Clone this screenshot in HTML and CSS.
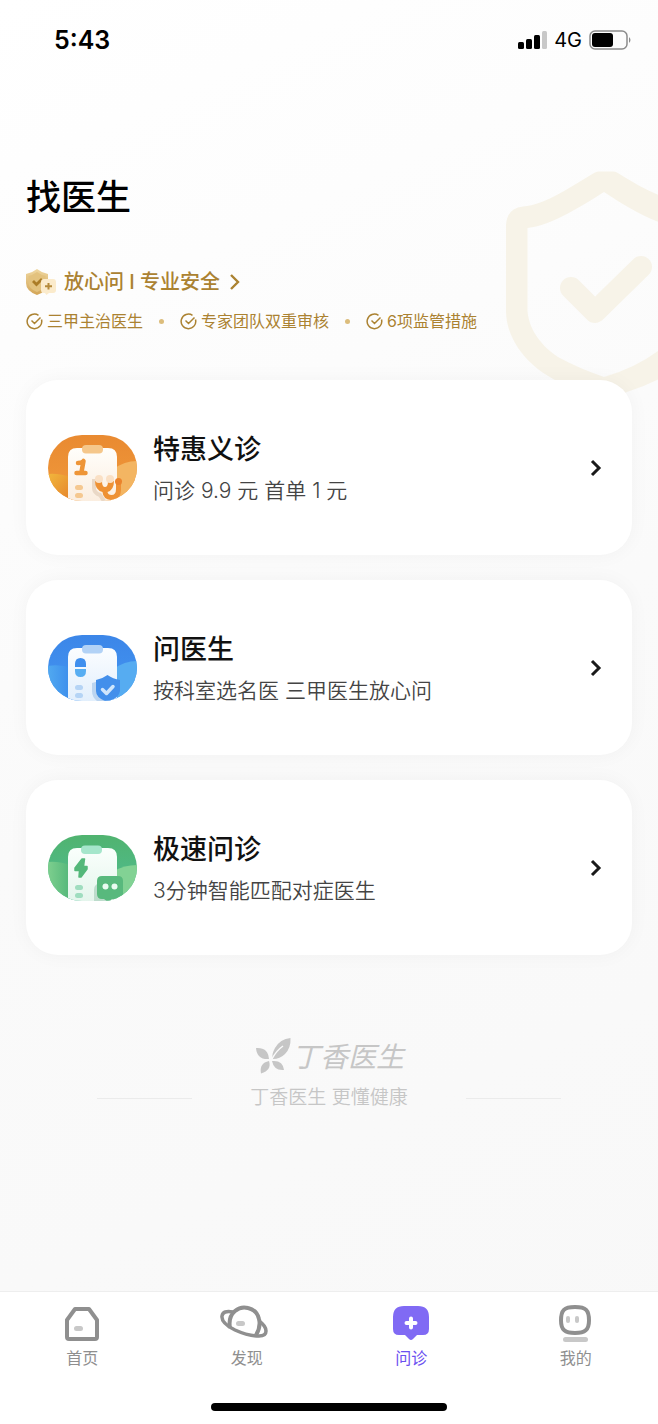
FILE: index.html
```html
<!DOCTYPE html>
<html lang="zh-CN">
<head>
    <meta charset="UTF-8">
    <meta name="viewport" content="width=device-width, initial-scale=1.0">
    <title>找医生</title>
    <link rel="stylesheet" href="styles.css">
</head>
<body>

    <header class="status">
        <span class="time">5:43</span>
        <div class="signal">
            <svg width="30" height="20" viewBox="0 0 30 20">
                <rect x="1" y="12" width="6" height="7" rx="1.5"/>
                <rect x="9" y="9" width="6" height="10" rx="1.5"/>
                <rect x="17" y="5" width="6" height="14" rx="1.5"/>
                <rect x="25" y="1" width="5" height="18" rx="1.5" fill="#c8c8c8"/>
            </svg>
            <span class="network">4G</span>
            <svg width="42" height="20" viewBox="0 0 42 20">
                <rect x="1" y="1" width="37" height="18" rx="5" fill="none" stroke="#8c8c8c" stroke-width="1.5"/>
                <rect x="3" y="3" width="21" height="14" rx="3"/>
                <path d="M40 7q3 3 0 6z" fill="#8c8c8c"/>
            </svg>
        </div>
    </header>

    <main class="page">
        <svg class="shield-bg" width="153" height="228" viewBox="0 0 153 228">
            <path fill-rule="evenodd" fill="#f7f3e8" d="M1 54Q2 37 18 35.500C40 34 67 15 90 1.500Q92 .5 94 .5H108Q110 .5 112 1.500C132 14 146 22 165 28V202Q145 214 122 221Q110 227 99 228Q76 223 50 209C18 192 1 165 1 140ZM22.500 57V140C24 160 38 176 53 186Q73 197 99 206Q130 197 153 180L165 170V55C140 47 120 35 99 21C78 34 48 54 22.500 57Z"/>
            <path d="M66 117L90 141L136 96" fill="none" stroke="#f7f3e8" stroke-width="22" stroke-linecap="round" stroke-linejoin="round"/>
        </svg>

        <h1>找医生</h1>

        <a class="safe" href="#">
            <svg width="30" height="27" viewBox="0 0 30 27">
                <defs>
                    <linearGradient id="gold" x1="0" y1="0" x2="0" y2="1">
                        <stop offset="0" stop-color="#efd7a0"/>
                        <stop offset="1" stop-color="#d3a556"/>
                    </linearGradient>
                </defs>
                <path d="M11 0Q16 4 22 5V14Q22 22 11 26Q0 22 0 14V5Q6 4 11 0Z" fill="url(#gold)"/>
                <path d="M11 3Q15 6 19.500 7V14Q19 20 11 23Q3 20 2.500 14V7Q7 6 11 3Z" fill="#e3c27e"/>
                <path d="M7 12L10.500 15.500L16 10" fill="none" stroke="#ab7c27" stroke-width="2.800"/>
                <path d="M18 10H27Q30 10 30 13V21Q30 24 27 24H23L20.500 26L19 24H18Q15 24 15 21V13Q15 10 18 10Z" fill="#fbebcc"/>
                <path d="M22.500 14V20.500M19 17.200H26" stroke="#b58a3b" stroke-width="2"/>
            </svg>
            <span>放心问 I 专业安全</span>
            <svg width="12" height="18" viewBox="0 0 12 18">
                <path d="M3 2L10 9L3 16" fill="none" stroke="#ab8231" stroke-width="2.400"/>
            </svg>
        </a>

        <ul class="tags">
            <li>
                <svg width="17" height="17" viewBox="0 0 17 17"><path d="M15.500 6.500A7.300 7.300 0 1 1 12.500 2.300M5.500 7.500L8.500 10.500L14.500 4.500"/></svg>
                三甲主治医生
            </li>
            <li class="dot"></li>
            <li>
                <svg width="17" height="17" viewBox="0 0 17 17"><path d="M15.500 6.500A7.300 7.300 0 1 1 12.500 2.300M5.500 7.500L8.500 10.500L14.500 4.500"/></svg>
                专家团队双重审核
            </li>
            <li class="dot"></li>
            <li>
                <svg width="17" height="17" viewBox="0 0 17 17"><path d="M15.500 6.500A7.300 7.300 0 1 1 12.500 2.300M5.500 7.500L8.500 10.500L14.500 4.500"/></svg>
                6项监管措施
            </li>
        </ul>

        <div class="cards">
            <a class="card" href="#">
                <svg width="89" height="66" viewBox="0 0 89 66">
                    <defs>
                        <clipPath id="pill"><rect width="89" height="66" rx="34" ry="33"/></clipPath>
                        <linearGradient id="o1" x1="0" y1="0" x2="0" y2="1"><stop offset="0" stop-color="#e98a31"/><stop offset="1" stop-color="#f09a3c"/></linearGradient>
                        <linearGradient id="o2" x1="0" y1="0" x2="1" y2="1"><stop offset="0" stop-color="#f1b63c"/><stop offset="1" stop-color="#e5812a"/></linearGradient>
                        <linearGradient id="o3" x1="0" y1="0" x2="0" y2="1"><stop offset="0" stop-color="#fffefb"/><stop offset="1" stop-color="#fbeee0"/></linearGradient>
                    </defs>
                    <g clip-path="url(#pill)">
                        <rect width="89" height="66" fill="url(#o1)"/>
                        <path d="M0 39Q12 38 24 43V66H0Z" fill="url(#o2)"/>
                        <path d="M66 34Q76 26 89 26V66H62Z" fill="#f3b562"/>
                        <path d="M20 66V22Q20 13 29 13H60Q69 13 69 22V66Z" fill="url(#o3)"/>
                        <rect x="34" y="10" width="21" height="8.500" rx="4" fill="#f5c78b"/>
                        <path d="M30 28Q34 28 35.500 26L33.500 37M28.500 38H37.500" fill="none" stroke="#ee9537" stroke-width="4.500" stroke-linecap="round" stroke-linejoin="round"/>
                        <rect x="27" y="50" width="8" height="5" rx="2.500" fill="#f5c890"/>
                        <rect x="27" y="58" width="8" height="5" rx="2.500" fill="#f5c890"/>
                        <path d="M46 44V53Q46 58 52 60L56 66" fill="none" stroke="#ead8c6" stroke-width="4"/>
                        <path d="M47 46H54Q54 52 57 52Q60 52 60 46H66Q66 55 59.500 57Q60 60 63.500 60Q68 60 68 54V46H73V55Q73 65 63 65Q55 64 54.500 57Q47 55 47 46Z" fill="#ee9134"/>
                        <circle cx="51" cy="44" r="4" fill="#fae0c5"/>
                        <circle cx="62" cy="44" r="4" fill="#fae0c5"/>
                        <circle cx="70.500" cy="46.500" r="3.500" fill="#eb832c"/>
                    </g>
                </svg>
                <div class="info">
                    <h2>特惠义诊</h2>
                    <p>问诊 9.9 元 首单 1 元</p>
                </div>
                <svg class="arrow" width="12" height="18" viewBox="0 0 12 18"><path d="M2 2L9 9L2 16"/></svg>
            </a>

            <a class="card" href="#">
                <svg width="89" height="66" viewBox="0 0 89 66">
                    <defs>
                        <linearGradient id="b1" x1="0" y1="0" x2="0" y2="1"><stop offset="0" stop-color="#3c86e8"/><stop offset="1" stop-color="#4396f2"/></linearGradient>
                        <linearGradient id="b2" x1="0" y1="0" x2="1" y2="0"><stop offset="0" stop-color="#51a9f0"/><stop offset="1" stop-color="#3a8bec"/></linearGradient>
                        <linearGradient id="b3" x1="0" y1="0" x2="0" y2="1"><stop offset="0" stop-color="#fbfdff"/><stop offset="1" stop-color="#e2effc"/></linearGradient>
                    </defs>
                    <g clip-path="url(#pill)">
                        <rect width="89" height="66" fill="url(#b1)"/>
                        <path d="M0 31Q12 29 24 33V66H0Z" fill="url(#b2)"/>
                        <path d="M66 34Q76 26 89 26V66H62Z" fill="#56acf1"/>
                        <path d="M20 66V22Q20 13 29 13H60Q69 13 69 22V66Z" fill="url(#b3)"/>
                        <rect x="34" y="10" width="21" height="8.500" rx="4" fill="#b2d2f6"/>
                        <path d="M27 32V29Q27 23 32.500 23Q38 23 38 29V32Z" fill="#3f8fee"/>
                        <path d="M27 34H38V36Q38 42 32.500 42Q27 42 27 36Z" fill="#58aef2"/>
                        <rect x="27" y="50" width="8" height="5" rx="2.500" fill="#b5d4f5"/>
                        <rect x="27" y="58" width="8" height="5" rx="2.500" fill="#b5d4f5"/>
                        <path d="M44 48Q52 46 56 43V66H49Q44 62 44 56Z" fill="#bcd5f0"/>
                        <path d="M59.500 40Q65 44 72 45V56Q71 63 59.500 67Q48 63 48 56V45Q54 44 59.500 40Z" fill="#438feb"/>
                        <path d="M54.500 54.500L58.500 58.500L65 51.500" fill="none" stroke="#cfe5fc" stroke-width="3.500" stroke-linecap="round" stroke-linejoin="round"/>
                    </g>
                </svg>
                <div class="info">
                    <h2>问医生</h2>
                    <p>按科室选名医 三甲医生放心问</p>
                </div>
                <svg class="arrow" width="12" height="18" viewBox="0 0 12 18"><path d="M2 2L9 9L2 16"/></svg>
            </a>

            <a class="card" href="#">
                <svg width="89" height="66" viewBox="0 0 89 66">
                    <defs>
                        <linearGradient id="g1" x1="0" y1="0" x2="0" y2="1"><stop offset="0" stop-color="#50b36f"/><stop offset="1" stop-color="#4fbe96"/></linearGradient>
                        <linearGradient id="g2" x1="0" y1="0" x2="1" y2="0"><stop offset="0" stop-color="#7dcf8e"/><stop offset="1" stop-color="#50b578"/></linearGradient>
                        <linearGradient id="g3" x1="0" y1="0" x2="0" y2="1"><stop offset="0" stop-color="#fafffc"/><stop offset="1" stop-color="#e4f5ec"/></linearGradient>
                    </defs>
                    <g clip-path="url(#pill)">
                        <rect width="89" height="66" fill="url(#g1)"/>
                        <path d="M0 27Q12 26 24 31V66H0Z" fill="url(#g2)"/>
                        <path d="M66 36Q76 30 89 30V66H62Z" fill="#82d294"/>
                        <path d="M20 66V22Q20 13 29 13H60Q69 13 69 22V66Z" fill="url(#g3)"/>
                        <rect x="33" y="10.500" width="21" height="8.500" rx="4" fill="#a5e6cb"/>
                        <path d="M34 24L27 33V35.500H31.500L31 42H33L39 34V31.500H35.500L36.500 24Z" fill="#54b87a" stroke="#54b87a" stroke-width="1.500" stroke-linejoin="round"/>
                        <rect x="27" y="50" width="8" height="5" rx="2.500" fill="#9fddbf"/>
                        <rect x="27" y="58" width="8" height="5" rx="2.500" fill="#9fddbf"/>
                        <path d="M46 66V55Q46 48 54 48H68V66Z" fill="#bddccc"/>
                        <path d="M54 41H70Q75 41 75 46V59Q75 64 70 64H64L60 67L56 64H54Q49 64 49 59V46Q49 41 54 41Z" fill="#58b97d"/>
                        <circle cx="57.500" cy="51.500" r="3" fill="#e9fbf1"/>
                        <circle cx="66.500" cy="51.500" r="3" fill="#e9fbf1"/>
                    </g>
                </svg>
                <div class="info">
                    <h2>极速问诊</h2>
                    <p>3分钟智能匹配对症医生</p>
                </div>
                <svg class="arrow" width="12" height="18" viewBox="0 0 12 18"><path d="M2 2L9 9L2 16"/></svg>
            </a>
        </div>

        <footer class="brand">
            <div class="logo">
                <svg width="38" height="38" viewBox="0 0 38 38" fill="#c6c6c6">
                    <path d="M36.500 0Q37 10 31 16Q26 21 19 21Q17 17 21 10Q26 1 36.500 0Z"/>
                    <path d="M29 8Q22 13 18 21" fill="none" stroke="#fafafa" stroke-width="1.500"/>
                    <path d="M2 10Q14 9 15 21Q3 22 2 10Z"/>
                    <path d="M15 23Q18 32 7 35.500Q5 25 15 23Z"/>
                    <path d="M18 23Q29 22 30 32Q20 33 18 23Z"/>
                </svg>
                <span>丁香医生</span>
            </div>
            <div class="slogan">丁香医生 更懂健康</div>
        </footer>
    </main>

    <nav class="tabbar">
        <div class="tabs">
            <a class="tab" href="#">
                <svg width="48" height="38" viewBox="0 0 48 38">
                    <path d="M17 5H31L39 16V33Q39 35 37 35H11Q9 35 9 33V16Z" fill="none" stroke="#8f8f8f" stroke-width="4" stroke-linejoin="round"/>
                    <rect x="16" y="22" width="9" height="5" rx="2.500" fill="#c8c8c8"/>
                </svg>
                <span>首页</span>
            </a>
            <a class="tab" href="#">
                <svg width="54" height="38" viewBox="0 0 54 38">
                    <path d="M10 24Q8 13 15 7Q21 2 28 4Q37 6 39 15Q41 23 36 31" fill="none" stroke="#8f8f8f" stroke-width="4"/>
                    <path d="M13 8Q3 6 2 12Q1 19 15 26Q28 32 39 32Q46 32 46 27Q46 22 39 17" fill="none" stroke="#8f8f8f" stroke-width="3.500"/>
                    <rect x="16" y="17" width="9" height="5" rx="2.500" fill="#c8c8c8"/>
                </svg>
                <span>发现</span>
            </a>
            <a class="tab active" href="#">
                <svg width="48" height="38" viewBox="0 0 48 38">
                    <path d="M17 2H31Q42 2 42 13V25Q42 31 36 31H30L26 35Q24 37 22 35L18 31H12Q6 31 6 25V13Q6 2 17 2Z" fill="#806af4"/>
                    <path d="M24 14.500V23.500M19.500 19H28.500" stroke="#fff" stroke-width="4" stroke-linecap="round"/>
                </svg>
                <span>问诊</span>
            </a>
            <a class="tab" href="#">
                <svg width="48" height="38" viewBox="0 0 48 38">
                    <path d="M23 3C34 3 37 6 37 16.500C37 26 33 29 23 29C13 29 9 26 9 16.500C9 6 12 3 23 3Z" fill="none" stroke="#8f8f8f" stroke-width="4"/>
                    <rect x="14" y="12" width="4" height="7" rx="2" fill="#c8c8c8"/>
                    <rect x="23" y="12" width="4" height="7" rx="2" fill="#c8c8c8"/>
                    <rect x="11" y="33" width="25" height="5" rx="2.500" fill="#c8c8c8"/>
                </svg>
                <span>我的</span>
            </a>
        </div>
        <div class="home-bar"></div>
    </nav>

</body>
</html>
```

FILE: styles.css
```css
* {
    box-sizing: border-box;
}
body {
    margin: 0;
    min-height: 100vh;
    display: flex;
    flex-direction: column;
    position: relative;
    font-family: Inter, "Noto Sans CJK SC", sans-serif;
    color: #111;
    background: linear-gradient(155deg, #fff 0%, #fdfdfd 20%, #fafafa 50%, #f8f8f8 100%);
}
h1, h2, p, ul {
    margin: 0;
    padding: 0;
}
a {
    color: inherit;
    text-decoration: none;
}
svg {
    display: block;
    flex-shrink: 0;
}

/* status bar */
.status {
    display: flex;
    justify-content: space-between;
    align-items: center;
    height: 80px;
    padding: 0 27px 0 54px;
    color: #000;
}
.time {
    font-size: 25px;
    font-weight: 600;
}
.signal {
    display: flex;
    align-items: center;
    gap: 7px;
}
.network {
    font-size: 20px;
    font-weight: 400;
}

/* content */
.page {
    flex: 1;
    padding: 92px 26px 0;
}
.shield-bg {
    position: absolute;
    top: 171px;
    right: 0;
    z-index: -1;
}
h1 {
    font-size: 35px;
    line-height: 50px;
    font-weight: 500;
    color: #000;
}
.safe {
    display: flex;
    align-items: center;
    gap: 8px;
    margin-top: 44px;
    font-size: 20px;
    line-height: 32px;
    font-weight: 500;
    color: #ab8231;
}
.tags {
    display: flex;
    align-items: center;
    gap: 16px;
    margin-top: 11px;
    list-style: none;
    font-size: 16px;
    line-height: 24px;
    color: #ab8231;
}
.tags li {
    display: flex;
    align-items: center;
    gap: 4px;
}
.tags path {
    fill: none;
    stroke: #ab8231;
    stroke-width: 1.5;
}
.tags .dot {
    width: 5px;
    height: 5px;
    border-radius: 50%;
    background: #dcbd7c;
}
.cards {
    display: flex;
    flex-direction: column;
    gap: 25px;
    margin-top: 47px;
}
.card {
    display: flex;
    align-items: center;
    padding: 47px 30px 47px 22px;
    background: #fff;
    border-radius: 32px;
    box-shadow: 0 0 20px rgba(0, 0, 0, 0.04);
}
.info {
    flex: 1;
    margin-left: 16px;
}
.info h2 {
    font-size: 27px;
    line-height: 46px;
    font-weight: 500;
}
.info p {
    font-size: 21px;
    line-height: 35px;
    font-weight: 350;
    color: #444;
}
.arrow path {
    fill: none;
    stroke: #1a1a1a;
    stroke-width: 3;
}

/* brand */
.brand {
    margin-top: 81px;
    text-align: center;
    color: #c6c6c6;
}
.logo {
    display: flex;
    justify-content: center;
    align-items: center;
    font-size: 28px;
    line-height: 42px;
    font-style: italic;
}
.slogan {
    display: flex;
    justify-content: center;
    align-items: center;
    gap: 58px;
    font-size: 19px;
    line-height: 40px;
    font-weight: 350;
}
.slogan::before, .slogan::after {
    content: "";
    width: 95px;
    height: 1px;
    background: #ebebeb;
}

/* bottom tabs */
.tabbar {
    padding: 12px 0 13px;
    background: #fff;
    border-top: 1px solid #eee;
}
.tabs {
    display: grid;
    grid-template-columns: repeat(4, 1fr);
}
.tab {
    display: flex;
    flex-direction: column;
    align-items: center;
    gap: 4px;
    font-size: 16px;
    line-height: 24px;
    color: #8f8f8f;
}
.tab.active {
    color: #6b50f0;
}
.home-bar {
    width: 236px;
    height: 8px;
    margin: 33px auto 0;
    border-radius: 4px;
    background: #000;
}
```
